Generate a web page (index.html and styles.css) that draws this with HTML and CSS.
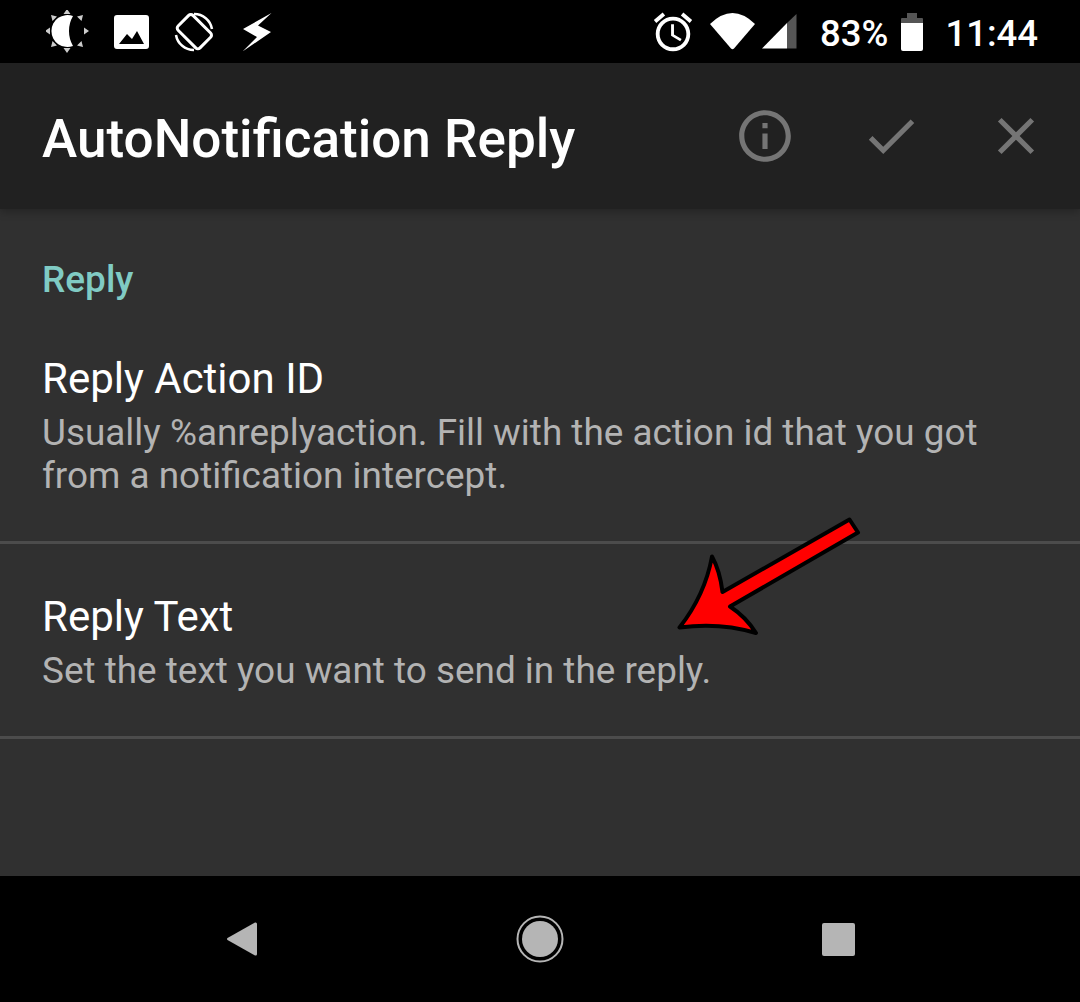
FILE: index.html
```html
<!DOCTYPE html>
<html lang="en">
<head>
    <meta charset="UTF-8">
    <title>AutoNotification Reply</title>
    <link rel="stylesheet" href="styles.css">
</head>
<body>
    <div class="phone">
        <div class="status-bar">
            <div class="status-left">
                <svg class="ic-sun" viewBox="47 10 43 43">
                    <path d="M74 16A16 16 0 1 0 74 46A30 30 0 0 1 74 16Z" fill="#fff"/>
                    <path d="M68 9l3.500 5h-7zM68 53l3.500-5h-7zM46 31l5-3.500v7zM90 31l-5-3.500v7zM52 15l6 1.500-4.500 4.500zM84 15l-6 1.500 4.500 4.500zM52 47l6-1.500-4.500-4.500zM84 47l-6-1.500 4.500-4.500z" fill="#ccc"/>
                </svg>
                <svg class="ic-photo" viewBox="114 14 35 34">
                    <path fill-rule="evenodd" d="M117 14h29a3 3 0 0 1 3 3v28a3 3 0 0 1-3 3h-29a3 3 0 0 1-3-3v-28a3 3 0 0 1 3-3zM119 43h25l-7-13-5 8-5-5z" fill="#fff"/>
                </svg>
                <svg class="ic-rotate" viewBox="175 12 40 40">
                    <rect x="179.500" y="21" width="31" height="21" rx="3" transform="rotate(45 195 32)" fill="none" stroke="#fff" stroke-width="3"/>
                    <path d="M195 14A18 18 0 0 1 213 29M195 50A18 18 0 0 1 177 35" fill="none" stroke="#fff" stroke-width="2.500"/>
                </svg>
                <svg class="ic-flash" viewBox="243 13 29 38">
                    <path d="M271.500 13L243 29l14 8-14.500 14.500L271 32l-13-6.500z" fill="#fff"/>
                </svg>
            </div>
            <div class="status-right">
                <svg class="ic-alarm" viewBox="0 0 24 24">
                    <path d="M22 5.720l-4.600-3.860-1.290 1.530 4.600 3.860L22 5.720zM7.880 3.390L6.600 1.860 2 5.710l1.290 1.530 4.590-3.850zM12.500 8H11v6l4.750 2.850.75-1.230-4-2.370V8zM12 4c-4.970 0-9 4.030-9 9s4.030 9 9 9 9-4.030 9-9-4.030-9-9-9zm0 16c-3.870 0-7-3.130-7-7s3.130-7 7-7 7 3.130 7 7-3.130 7-7 7z" fill="#fff"/>
                </svg>
                <svg class="ic-wifi" viewBox="712 13 45 37">
                    <path d="M712 24Q734.500 2 757 24L736 48.500Q734.500 50 733 48.500Z" fill="#fff"/>
                </svg>
                <svg class="ic-signal" viewBox="764 15 35 35">
                    <path d="M789 24L764 49.500H789Z" fill="#fff"/>
                    <path d="M789 24L798.500 15V49.500H789Z" fill="#555"/>
                </svg>
                <span class="battery-text">83%</span>
                <svg class="ic-battery" viewBox="902 12 22 38">
                    <path d="M908 12h10v5h5a1 1 0 0 1 1 1v4h-22v-4a1 1 0 0 1 1-1h5z" fill="#555"/>
                    <path d="M902 22h22v26a2 2 0 0 1-2 2h-18a2 2 0 0 1-2-2z" fill="#fff"/>
                </svg>
                <span class="clock">11:44</span>
            </div>
        </div>

        <div class="app-header">
            <h1>AutoNotification Reply</h1>
            <div class="header-actions">
                <svg viewBox="0 0 24 24"><path d="M11 7h2v2h-2zm0 4h2v6h-2zm1-9C6.480 2 2 6.480 2 12s4.480 10 10 10 10-4.480 10-10S17.520 2 12 2zm0 18c-4.410 0-8-3.590-8-8s3.590-8 8-8 8 3.590 8 8-3.590 8-8 8z"/></svg>
                <svg viewBox="0 0 24 24"><path d="M9 16.170L4.830 12l-1.410 1.410L9 19 21 7l-1.410-1.410z"/></svg>
                <svg viewBox="0 0 24 24"><path d="M19 6.410L17.590 5 12 10.590 6.410 5 5 6.410 10.590 12 5 17.590 6.410 19 12 13.410 17.590 19 19 17.590 13.410 12z"/></svg>
            </div>
        </div>

        <div class="content">
            <h2 class="section-title">Reply</h2>
            <div class="pref">
                <div class="pref-title">Reply Action ID</div>
                <div class="pref-summary">Usually %anreplyaction. Fill with the action id that you got from a notification intercept.</div>
            </div>
            <div class="pref">
                <div class="pref-title">Reply Text</div>
                <div class="pref-summary">Set the text you want to send in the reply.</div>
            </div>

            <svg class="arrow" viewBox="670 510 200 135">
                <path d="M849.500 519.500L722.500 592Q720 571 712 556.500Q705 595 679.500 627.500Q720 622 756 633Q746 617 730 606.500L858 532.500Z" fill="#f00" stroke="#000" stroke-width="4" stroke-linejoin="round"/>
            </svg>
        </div>

        <div class="nav-bar">
            <div class="nav-btn">
                <svg class="ic-back" viewBox="0 0 30 34"><path d="M28 0.500Q30 0 30 2V32Q30 34 28 33.500L0.500 18Q-0.500 17 0.500 16Z"/></svg>
            </div>
            <div class="nav-btn">
                <svg class="ic-home" viewBox="0 0 48 48">
                    <circle cx="24" cy="24" r="22.500" fill="none" stroke="#b5b5b5" stroke-width="2"/>
                    <circle cx="24" cy="24" r="18"/>
                </svg>
            </div>
            <div class="nav-btn">
                <div class="ic-recent"></div>
            </div>
        </div>
    </div>
</body>
</html>
```

FILE: styles.css
```css
* {
    margin: 0;
    padding: 0;
    box-sizing: border-box;
}

body {
    font-family: Roboto, 'Liberation Sans', sans-serif;
    background: #000;
}

.phone {
    width: 1080px;
    height: 1002px;
    display: flex;
    flex-direction: column;
    overflow: hidden;
}

.status-bar {
    height: 63px;
    background: #000;
    color: #fff;
    display: flex;
    justify-content: space-between;
    align-items: center;
    padding: 0 42px 0 46px;
    flex-shrink: 0;
}

.status-left,
.status-right {
    display: flex;
    align-items: center;
}

.ic-sun {
    width: 43px;
    height: 43px;
    margin-right: 25px;
}

.ic-photo {
    width: 35px;
    height: 34px;
    margin-right: 25px;
}

.ic-rotate {
    width: 40px;
    height: 40px;
    margin-right: 29px;
}

.ic-flash {
    width: 29px;
    height: 38px;
}

.ic-alarm {
    width: 46px;
    height: 46px;
    margin-right: 14px;
}

.ic-wifi {
    width: 45px;
    height: 37px;
    margin-right: 7px;
}

.ic-signal {
    width: 35px;
    height: 35px;
    margin-right: 23px;
}

.battery-text {
    font-size: 36.500px;
    font-weight: 500;
    margin-top: 3px;
    margin-right: 13px;
}

.ic-battery {
    width: 22px;
    height: 38px;
    margin-right: 22px;
}

.clock {
    font-size: 36.500px;
    font-weight: 500;
    margin-top: 3px;
}

.app-header {
    height: 146px;
    background: #212121;
    display: flex;
    justify-content: space-between;
    align-items: center;
    padding: 0 33px 0 42px;
    box-shadow: 0 3px 8px rgba(0,0,0,0.25);
    position: relative;
    z-index: 1;
    flex-shrink: 0;
}

.app-header h1 {
    font-size: 53.100px;
    font-weight: 500;
    color: #fff;
    padding-top: 6px;
}

.header-actions {
    display: flex;
    gap: 63.5px;
}

.header-actions svg {
    width: 62px;
    height: 62px;
    fill: #757575;
    display: block;
}

.content {
    flex: 1;
    background: #303030;
    position: relative;
    padding-top: 49px;
}

.section-title {
    font-size: 37px;
    font-weight: 500;
    color: #80cbc4;
    padding: 0 42px;
    line-height: 44px;
}

.pref {
    padding: 0 42px 44px;
    border-bottom: 3px solid #4c4c4c;
    margin-top: 52px;
}

.pref + .pref {
    margin-top: 0;
    padding-top: 48px;
}

.pref-title {
    font-size: 42px;
    color: #fff;
    line-height: 50px;
    margin-bottom: 7px;
}

.pref-summary {
    font-size: 36.900px;
    color: #b3b3b3;
    line-height: 43px;
}

.arrow {
    position: absolute;
    left: 670px;
    top: 301px;
    width: 200px;
    height: 135px;
}

.nav-bar {
    height: 126px;
    background: #000;
    display: flex;
    justify-content: center;
    align-items: center;
    flex-shrink: 0;
}

.nav-btn {
    width: 298.500px;
    display: flex;
    justify-content: center;
    align-items: center;
}

.ic-back {
    width: 30px;
    height: 34px;
    fill: #b5b5b5;
}

.ic-home {
    width: 48px;
    height: 48px;
    fill: #b5b5b5;
}

.ic-recent {
    width: 33px;
    height: 33px;
    background: #b5b5b5;
    border-radius: 2px;
}
```
